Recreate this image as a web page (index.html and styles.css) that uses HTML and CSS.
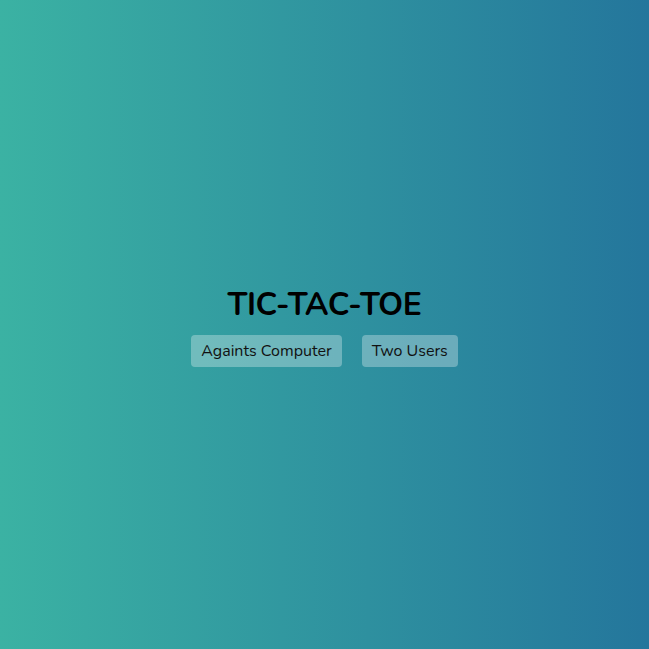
FILE: index.html
```html
<!DOCTYPE html>
<html>
<head>
<meta charset="utf-8">
<link rel="stylesheet" href="styles.css">
</head>
<body>
<main class="screen">
  <h1 class="title">TIC-TAC-TOE</h1>
  <div class="modes">
    <button class="mode">Againts Computer</button>
    <button class="mode">Two Users</button>
  </div>
</main>
</body>
</html>
```
FILE: styles.css
```css
html, body {
  margin: 0;
  padding: 0;
  height: 100%;
}
body {
  background: linear-gradient(to right, #3bb2a3, #24769c);
  font-family: "Nunito", "Lato", "Noto Sans", sans-serif;
}
.screen {
  height: 100%;
  display: flex;
  flex-direction: column;
  align-items: center;
  justify-content: center;
}
.title {
  margin: 3px 0 10px;
  font-size: 32px;
  font-weight: 700;
  letter-spacing: -0.4px;
  color: #000;
  line-height: 40px;
}
.modes {
  display: flex;
  gap: 20px;
}
.mode {
  font-family: inherit;
  font-size: 16px;
  color: #111;
  background: rgba(255, 255, 255, 0.3);
  border: none;
  border-radius: 4px;
  height: 32px;
  padding: 0 10px;
}
```
